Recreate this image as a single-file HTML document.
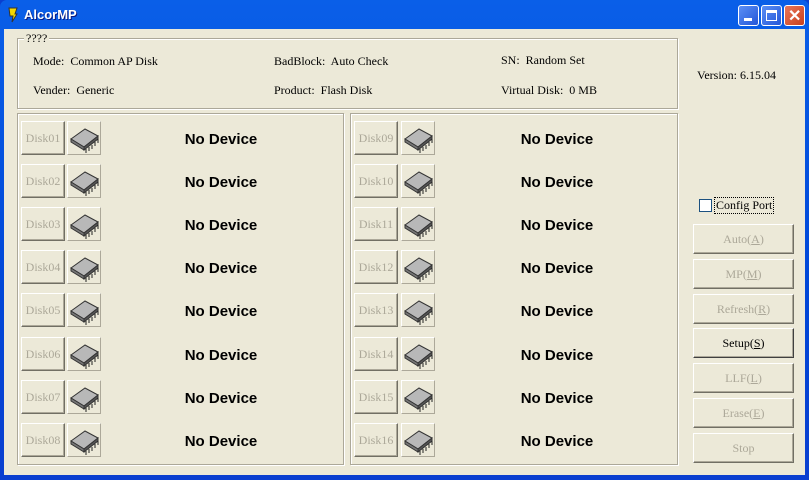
<!DOCTYPE html>
<html><head><meta charset="utf-8"><style>
*{margin:0;padding:0;box-sizing:border-box}
body{width:809px;height:480px;overflow:hidden;background:#0a3fd0;font-family:"Liberation Serif",serif;font-size:12px;position:relative}
.win{position:absolute;left:0;top:0;width:809px;height:480px;background:linear-gradient(#0a5fe8,#0047d8 60%,#0a3fd0);border-radius:7px 7px 0 0}
.title{position:absolute;left:24px;top:7px;color:#fff;font:bold 13px "Liberation Sans",sans-serif;text-shadow:1px 1px #0a1a80}
.client{position:absolute;left:4px;top:29px;width:801px;height:446px;background:#ece9d8}
.a{position:absolute}
.grp{position:absolute;border:1px solid #aca899;box-shadow:inset 1px 1px #fff,1px 1px #fff}
.btn{position:absolute;border:1px solid;border-color:#fff #716f64 #716f64 #fff;box-shadow:inset -1px -1px #aca899;color:#aca899;text-align:center;background:#ece9d8}
.ib{position:absolute;width:34px;height:34px;border:1px solid;border-color:#fff #aca899 #aca899 #fff;}
.nd{position:absolute;font:bold 15px "Liberation Sans",sans-serif;color:#000;width:160px;text-align:center}
.tb{position:absolute;top:5px;width:21px;height:21px;border:1px solid #fff;border-radius:3px;background:linear-gradient(135deg,#5b8ff5,#2457d8)}
</style></head><body>
<div class="win"></div>
<svg class="a" style="left:7px;top:7px" width="12" height="16"><path d="M2 1h8l-2 6h2l-5 8 1-6H3z" fill="#f5d800" stroke="#333" stroke-width="1"/></svg>
<div class="title">AlcorMP</div>
<div class="tb" style="left:738px"><div class="a" style="left:5px;top:12px;width:8px;height:3px;background:#fff"></div></div>
<div class="tb" style="left:761px"><div class="a" style="left:4px;top:4px;width:11px;height:11px;border:1px solid #fff;border-top-width:3px"></div></div>
<div class="tb" style="left:784px;background:linear-gradient(135deg,#e8765a,#c9401c)"><div class="a" style="left:3px;top:0;color:#fff;font:bold 16px 'Liberation Sans',sans-serif">✕</div></div>
<div class="client">
<div class="grp" style="left:13px;top:9px;width:661px;height:71px"></div>
<div class="a" style="left:20px;top:2px;background:#ece9d8;padding:0 2px">????</div>
<div class="a" style="left:29px;top:25px">Mode:&nbsp; Common AP Disk</div>
<div class="a" style="left:29px;top:54px">Vender:&nbsp; Generic</div>
<div class="a" style="left:270px;top:25px">BadBlock:&nbsp; Auto Check</div>
<div class="a" style="left:270px;top:54px">Product:&nbsp; Flash Disk</div>
<div class="a" style="left:497px;top:24px">SN:&nbsp; Random Set</div>
<div class="a" style="left:497px;top:54px">Virtual Disk:&nbsp; 0 MB</div>
<div class="a" style="left:693px;top:39px">Version: 6.15.04</div>
<div class="grp" style="left:13px;top:84px;width:327px;height:352px"></div>
<div class="grp" style="left:346px;top:84px;width:328px;height:352px"></div>
<div class="a" style="left:695px;top:170px;width:13px;height:13px;border:1px solid #1c5180;background:#fff"></div>
<div class="a" style="left:710px;top:168px;border:1px dotted #000;padding:0 1px;color:#000">Config Port</div>
<div class="btn" style="left:689px;top:195px;width:101px;height:30px;line-height:28px">Auto(<u>A</u>)</div>
<div class="btn" style="left:689px;top:230px;width:101px;height:30px;line-height:28px">MP(<u>M</u>)</div>
<div class="btn" style="left:689px;top:265px;width:101px;height:30px;line-height:28px">Refresh(<u>R</u>)</div>
<div class="btn" style="left:689px;top:299px;width:101px;height:30px;line-height:28px;color:#000;border-color:#fff #404040 #404040 #fff">Setup(<u>S</u>)</div>
<div class="btn" style="left:689px;top:334px;width:101px;height:30px;line-height:28px">LLF(<u>L</u>)</div>
<div class="btn" style="left:689px;top:369px;width:101px;height:30px;line-height:28px">Erase(<u>E</u>)</div>
<div class="btn" style="left:689px;top:404px;width:101px;height:30px;line-height:28px">Stop</div>
<svg width="0" height="0" style="position:absolute"><defs><g id="chip"><path d="M3 17 L17 7 L30 14 L16 25 Z" fill="#b8b8b8" stroke="#333"/><path d="M3 17 L16 25 L16 28 L3 20Z" fill="#777" stroke="#333"/><path d="M16 25 L30 14 L30 17 L16 28Z" fill="#555" stroke="#333"/><path d="M18 27v4M21 25v4M24 23v4M27 20v4M30 17v4" stroke="#222"/></g></defs></svg>
<div class="btn" style="left:17px;top:92px;width:44px;height:34px;line-height:32px">Disk01</div><div class="ib" style="left:63px;top:92px"><svg width="34" height="34"><use href="#chip"/></svg></div><div class="nd" style="left:137px;top:102px">No Device</div>
<div class="btn" style="left:17px;top:135px;width:44px;height:34px;line-height:32px">Disk02</div><div class="ib" style="left:63px;top:135px"><svg width="34" height="34"><use href="#chip"/></svg></div><div class="nd" style="left:137px;top:145px">No Device</div>
<div class="btn" style="left:17px;top:178px;width:44px;height:34px;line-height:32px">Disk03</div><div class="ib" style="left:63px;top:178px"><svg width="34" height="34"><use href="#chip"/></svg></div><div class="nd" style="left:137px;top:188px">No Device</div>
<div class="btn" style="left:17px;top:221px;width:44px;height:34px;line-height:32px">Disk04</div><div class="ib" style="left:63px;top:221px"><svg width="34" height="34"><use href="#chip"/></svg></div><div class="nd" style="left:137px;top:231px">No Device</div>
<div class="btn" style="left:17px;top:264px;width:44px;height:34px;line-height:32px">Disk05</div><div class="ib" style="left:63px;top:264px"><svg width="34" height="34"><use href="#chip"/></svg></div><div class="nd" style="left:137px;top:274px">No Device</div>
<div class="btn" style="left:17px;top:308px;width:44px;height:34px;line-height:32px">Disk06</div><div class="ib" style="left:63px;top:308px"><svg width="34" height="34"><use href="#chip"/></svg></div><div class="nd" style="left:137px;top:318px">No Device</div>
<div class="btn" style="left:17px;top:351px;width:44px;height:34px;line-height:32px">Disk07</div><div class="ib" style="left:63px;top:351px"><svg width="34" height="34"><use href="#chip"/></svg></div><div class="nd" style="left:137px;top:361px">No Device</div>
<div class="btn" style="left:17px;top:394px;width:44px;height:34px;line-height:32px">Disk08</div><div class="ib" style="left:63px;top:394px"><svg width="34" height="34"><use href="#chip"/></svg></div><div class="nd" style="left:137px;top:404px">No Device</div>
<div class="btn" style="left:350px;top:92px;width:44px;height:34px;line-height:32px">Disk09</div><div class="ib" style="left:397px;top:92px"><svg width="34" height="34"><use href="#chip"/></svg></div><div class="nd" style="left:473px;top:102px">No Device</div>
<div class="btn" style="left:350px;top:135px;width:44px;height:34px;line-height:32px">Disk10</div><div class="ib" style="left:397px;top:135px"><svg width="34" height="34"><use href="#chip"/></svg></div><div class="nd" style="left:473px;top:145px">No Device</div>
<div class="btn" style="left:350px;top:178px;width:44px;height:34px;line-height:32px">Disk11</div><div class="ib" style="left:397px;top:178px"><svg width="34" height="34"><use href="#chip"/></svg></div><div class="nd" style="left:473px;top:188px">No Device</div>
<div class="btn" style="left:350px;top:221px;width:44px;height:34px;line-height:32px">Disk12</div><div class="ib" style="left:397px;top:221px"><svg width="34" height="34"><use href="#chip"/></svg></div><div class="nd" style="left:473px;top:231px">No Device</div>
<div class="btn" style="left:350px;top:264px;width:44px;height:34px;line-height:32px">Disk13</div><div class="ib" style="left:397px;top:264px"><svg width="34" height="34"><use href="#chip"/></svg></div><div class="nd" style="left:473px;top:274px">No Device</div>
<div class="btn" style="left:350px;top:308px;width:44px;height:34px;line-height:32px">Disk14</div><div class="ib" style="left:397px;top:308px"><svg width="34" height="34"><use href="#chip"/></svg></div><div class="nd" style="left:473px;top:318px">No Device</div>
<div class="btn" style="left:350px;top:351px;width:44px;height:34px;line-height:32px">Disk15</div><div class="ib" style="left:397px;top:351px"><svg width="34" height="34"><use href="#chip"/></svg></div><div class="nd" style="left:473px;top:361px">No Device</div>
<div class="btn" style="left:350px;top:394px;width:44px;height:34px;line-height:32px">Disk16</div><div class="ib" style="left:397px;top:394px"><svg width="34" height="34"><use href="#chip"/></svg></div><div class="nd" style="left:473px;top:404px">No Device</div>
</div>
</body></html>
